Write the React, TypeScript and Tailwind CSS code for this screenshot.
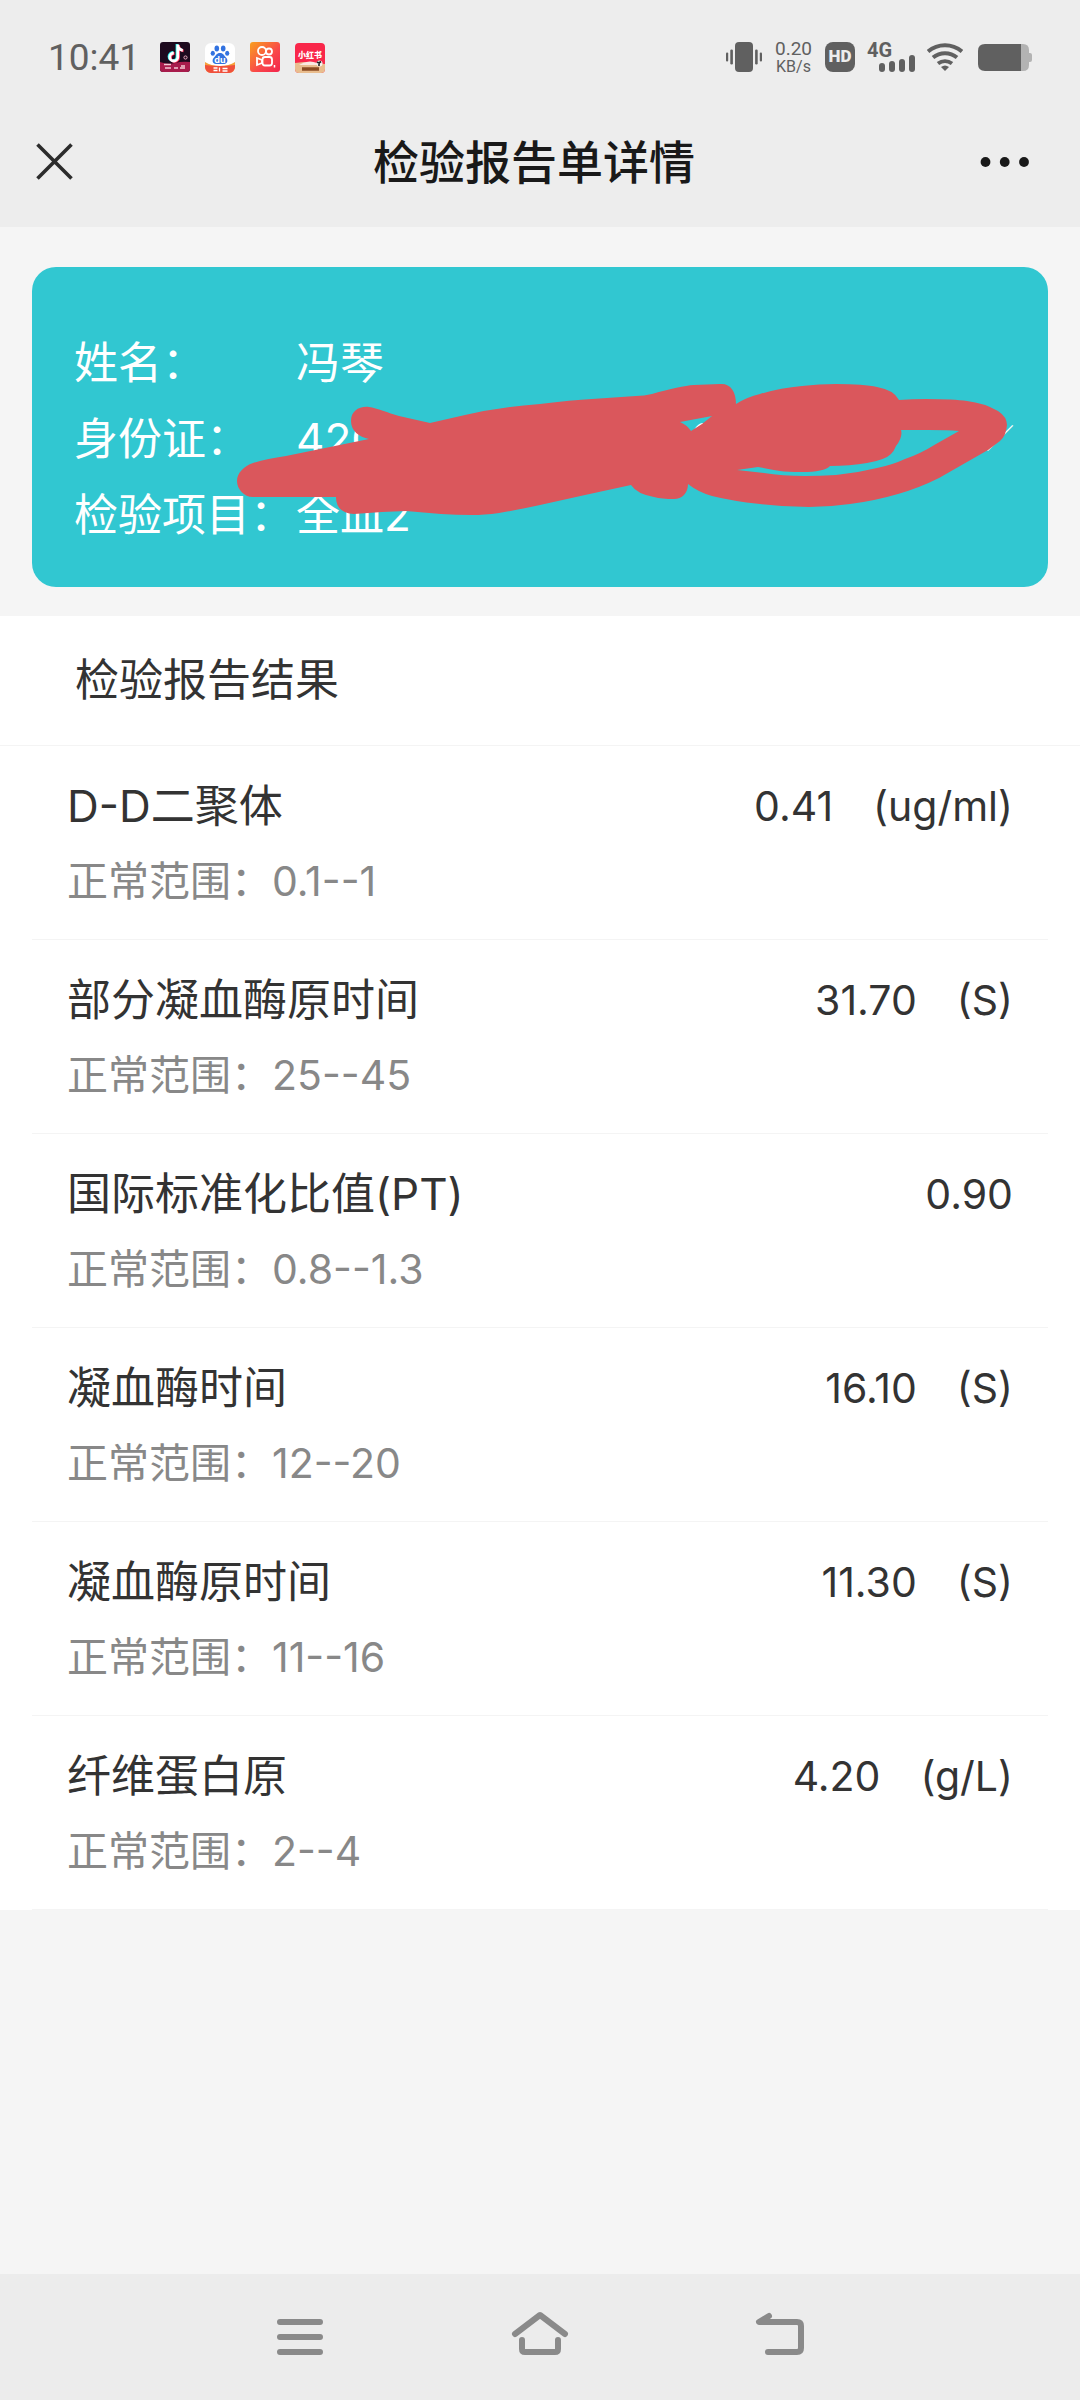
import React, { FC } from "react";

type Result = {
  name: string;
  range: string;
  value: string;
  unit?: string;
};

const results: Result[] = [
  { name: "D-D二聚体", range: "0.1--1", value: "0.41", unit: "(ug/ml)" },
  { name: "部分凝血酶原时间", range: "25--45", value: "31.70", unit: "(S)" },
  { name: "国际标准化比值(PT)", range: "0.8--1.3", value: "0.90" },
  { name: "凝血酶时间", range: "12--20", value: "16.10", unit: "(S)" },
  { name: "凝血酶原时间", range: "11--16", value: "11.30", unit: "(S)" },
  { name: "纤维蛋白原", range: "2--4", value: "4.20", unit: "(g/L)" },
];

const DouyinIcon = () => (
  <svg className="size-[30px]" viewBox="0 0 30 30" aria-hidden="true">
    <rect width="30" height="30" rx="3" fill="#1d0a1e" />
    <path d="M0 20q8 3 15 1t15-1v7a3 3 0 0 1-3 3H3a3 3 0 0 1-3-3z" fill="#a81c4c" />
    <g fill="none" strokeWidth="2.800">
      <path d="M17 2v12.500a4 4 0 1 1-4-4M17 3c.5 3 2.500 4.500 5 4.800" stroke="#25f4ee" />
      <path d="M18.600 3v12.500a4 4 0 1 1-4-4M18.600 4c.5 3 2.500 4.500 5 4.800" stroke="#fe2c55" />
      <path d="M17.800 2.500v12.500a4 4 0 1 1-4-4M17.800 3.500c.5 3 2.500 4.500 5 4.800" stroke="#fff" />
    </g>
    <circle cx="25.500" cy="15.500" r="1.600" fill="none" stroke="#e9a9bd" />
    <path d="M4 22.500h7M5 26h6m3 0h4m2 0h5M21 24h4" stroke="#f3c9d4" strokeWidth="1.300" />
  </svg>
);

const BaiduIcon = () => (
  <svg className="mt-px size-[30px]" viewBox="0 0 30 30" aria-hidden="true">
    <rect width="30" height="30" rx="6" fill="#fff" />
    <path d="M0 19q6 4 15 4t15-4v5a6 6 0 0 1-6 6H6a6 6 0 0 1-6-6z" fill="#f6a13c" />
    <path d="M0 22q8 1 15 1t15-1v2a6 6 0 0 1-6 6H6a6 6 0 0 1-6-6z" fill="#f0503c" />
    <g fill="#3272e0">
      <ellipse cx="11.800" cy="5.500" rx="2.300" ry="2.900" />
      <ellipse cx="18.200" cy="5.500" rx="2.300" ry="2.900" />
      <ellipse cx="7.800" cy="10.300" rx="2.100" ry="2.500" />
      <ellipse cx="22.200" cy="10.300" rx="2.100" ry="2.500" />
      <path d="M15 10c3.500 0 4 2.500 6 4.500 2.500 2.500 1.500 6.500-2 6.500h-8c-3.500 0-4.500-4-2-6.500 2-2 2.500-4.500 6-4.500z" />
    </g>
    <text x="15" y="20" fontSize="9" fontWeight="700" textAnchor="middle" fill="#fff" fontFamily="Inter, sans-serif">du</text>
    <path d="M8.500 25h4m-4 2.500h4m2-3v4m3-3h5m-5 2.500h5" stroke="#fff" strokeWidth="1.300" />
  </svg>
);

const KuaishouIcon = () => (
  <svg className="size-[30px]" viewBox="0 0 30 30" aria-hidden="true">
    <defs>
      <linearGradient id="ks" x1="0" y1="0" x2="1" y2="1">
        <stop offset="0" stopColor="#f9a01f" />
        <stop offset=".6" stopColor="#f9474a" />
        <stop offset="1" stopColor="#f3244c" />
      </linearGradient>
    </defs>
    <rect width="30" height="30" rx="3" fill="url(#ks)" />
    <g fill="none" stroke="#fff" strokeWidth="1.800">
      <circle cx="12" cy="9" r="4" />
      <circle cx="19" cy="9.500" r="3" />
      <rect x="12.500" y="15" width="9.500" height="8.500" rx="2.500" />
      <path d="M12 18l-5-2v7l5-2z" />
    </g>
    <path d="M24.500 23v2.500" stroke="#fff" strokeWidth="1.500" />
  </svg>
);

const XiaohongshuIcon = () => (
  <svg className="mt-px size-[30px]" viewBox="0 0 30 30" aria-hidden="true">
    <rect width="30" height="30" rx="4" fill="#f9274a" />
    <path d="M0 20l9-1 9 1 12 1v5a4 4 0 0 1-4 4H4a4 4 0 0 1-4-4z" fill="#e9bd8e" />
    <path d="M8 20q7-3 14 0l2 2H4z" fill="#fbe9e0" />
    <circle cx="24.500" cy="20.500" r="3" fill="#f4f1ee" />
    <path d="M22 19l2 1 2-1.500M24 20v3" stroke="#222" strokeWidth="1.600" fill="none" />
    <path d="M7 26h17" stroke="#8b4d22" strokeWidth="3.500" />
    <text x="15" y="15" fontSize="8" fontWeight="900" textAnchor="middle" fill="#fff" fontFamily="'Noto Sans CJK SC', sans-serif">小红书</text>
  </svg>
);

const VibrateIcon = () => (
  <svg className="h-[30px] w-9" viewBox="0 0 36 30" fill="#606060" aria-hidden="true">
    <rect x="9" width="18" height="30" rx="4" />
    <rect y="10.500" width="2.200" height="9" rx="1" />
    <rect x="4.300" y="7.500" width="2.600" height="15" rx="1.200" />
    <rect x="29.100" y="7.500" width="2.600" height="15" rx="1.200" />
    <rect x="33.800" y="10.500" width="2.200" height="9" rx="1" />
  </svg>
);

const WifiIcon = () => (
  <svg className="h-[28px] w-9" viewBox="0 0 36 28" fill="none" stroke="#606060" strokeWidth="4" aria-hidden="true">
    <path d="M1 8.500a26 26 0 0 1 34 0" />
    <path d="M6 14.500a19 19 0 0 1 24 0" />
    <path d="M11 20.500a12 12 0 0 1 14 0" />
    <path d="M14 24q4-3 8 0l-4 4z" fill="#606060" stroke="none" />
  </svg>
);

const BatteryIcon = () => (
  <svg className="ml-[15px] h-[27px] w-[54px]" viewBox="0 0 54 27" aria-hidden="true">
    <path d="M43 0h2q6 0 6 6v3h1q2 0 2 2v5q0 2-2 2h-1v3q0 6-6 6h-2z" fill="#b3b3b3" />
    <path d="M7 0h36v27H7q-7 0-7-7V7q0-7 7-7z" fill="#606060" />
  </svg>
);

const StatusBar = () => (
  <div className="flex h-24 items-center justify-between pt-[18px] pr-12 pl-12 text-[#606060]">
    <div className="flex items-center gap-5">
      <span className="font-['Roboto','Noto_Sans',sans-serif] text-[37px] leading-none">10:41</span>
      <div className="flex items-start gap-[15px]">
        <DouyinIcon />
        <BaiduIcon />
        <KuaishouIcon />
        <XiaohongshuIcon />
      </div>
    </div>
    <div className="flex items-center gap-3 font-['Roboto','Noto_Sans',sans-serif]">
      <VibrateIcon />
      <div className="flex w-[39px] flex-col items-center">
        <span className="text-[19px] leading-5">0.20</span>
        <span className="text-[16px] leading-4">KB/s</span>
      </div>
      <span className="flex size-[30px] items-center justify-center rounded-lg bg-[#606060] text-[17px] font-black text-[#ededed]">
        HD
      </span>
      <div className="flex h-[30px] w-12 flex-col">
        <span className="text-[20px] leading-4 font-bold">4G</span>
        <div className="-mt-[3px] flex items-end gap-1 self-end">
          <i className="h-[9px] w-1.5 rounded-sm bg-[#606060]" />
          <i className="h-[11px] w-1.5 rounded-sm bg-[#606060]" />
          <i className="h-[13px] w-1.5 rounded-sm bg-[#606060]" />
          <i className="h-[17px] w-1.5 rounded-sm bg-[#606060]" />
        </div>
      </div>
      <div className="flex items-center">
        <WifiIcon />
        <BatteryIcon />
      </div>
    </div>
  </div>
);

const TitleBar = () => (
  <div className="flex h-[131px] items-center justify-between pr-[51px] pl-9">
    <button type="button" aria-label="关闭" className="w-[52px]">
      <svg className="size-[37px]" viewBox="0 0 37 37" stroke="#2c2c2c" strokeWidth="3.600">
        <path d="M1.500 1.500l34 34M35.500 1.500l-34 34" />
      </svg>
    </button>
    <h1 className="text-[46px] leading-none font-medium text-[#191919]">检验报告单详情</h1>
    <button type="button" aria-label="更多">
      <svg className="h-[10px] w-[49px]" viewBox="0 0 49 10" fill="#191919">
        <circle cx="5.500" cy="5" r="4.900" />
        <circle cx="24.700" cy="5" r="4.900" />
        <circle cx="44" cy="5" r="4.900" />
      </svg>
    </button>
  </div>
);

// Marker strokes that hide the ID number
const Marker = () => (
  <svg className="absolute inset-0 size-full" viewBox="0 0 1016 320" preserveAspectRatio="none" aria-hidden="true">
    <path
      fill="#da575c"
      fillRule="evenodd"
      d="M205 214C205 206 212 199 221 196C230 193 241 191 254 189L298 180L337 172C327 170 319 164 319 154C319 144 327 139 337 140C345 141 356 146 367 149L398 156L433 148Q467 140 508 137Q540 133 560 132L604 129Q612 129 620 127Q648 119 662 118L688 117C698 116 704 124 704 137Q715 130 728 127Q748 121 770 119Q787 117 804 117Q832 117 845 120Q862 123 867 133Q880 132 894 132Q922 132 935 134Q952 136 966 144Q975 150 975 158Q974 169 968 174L956 183L907 211Q887 221 866 227Q842 234 818 237Q797 240 777 240Q752 240 728 237Q700 234 680 229Q666 225 656 217C656 226 650 232 642 232Q630 232 622 230Q605 227 599 218L553 228L508 238Q485 243 467 246Q452 248 440 248Q424 248 409 247L374 244L350 245L322 247Q304 246 304 230L221 230C212 230 205 222 205 214ZM648 155L680 149L670 157L659 164Q655 158 648 155ZM705 203L726 200Q737 202 748 204Q755 205 770 205Q792 205 798 199Q818 199 835 196Q853 193 859 187Q862 184 864 179Q871 170 869 163Q883 163 897 163Q915 163 927 164L904 177Q888 187 873 192Q860 198 845 201Q825 206 804 208Q788 209 773 209Q750 209 732 206Z"
    />
  </svg>
);

const PatientCard = () => (
  <section className="relative mx-8 mt-10 rounded-3xl bg-[#31c7d1] pt-[58px] pr-[34px] pb-[34px] pl-[42px] text-[44px] leading-[76px] text-white">
    <dl>
      <div className="flex">
        <dt className="w-[222px] shrink-0">姓名：</dt>
        <dd>冯琴</dd>
      </div>
      <div className="flex">
        <dt className="w-[222px] shrink-0">身份证：</dt>
        <dd className="flex grow">
          <span className="grow">420</span>
          <span className="pr-[268px]">0</span>
          <span className="text-[28px]">／</span>
        </dd>
      </div>
      <div className="flex">
        <dt className="w-[222px] shrink-0">检验项目：</dt>
        <dd>全血2</dd>
      </div>
    </dl>
    <Marker />
  </section>
);

type Prop = {
  result: Result;
};
const ResultRow: FC<Prop> = ({ result }) => {
  return (
    <li className="mx-8 border-b border-[#f4f4f4] pt-[22px] pr-[35px] pb-[21px] pl-[35px]">
      <div className="flex items-center justify-between leading-[76px]">
        <h3 className="text-[44px]">{result.name}</h3>
        <div className="flex gap-10 text-[41px]">
          <span>{result.value}</span>
          {result.unit && <span>{result.unit}</span>}
        </div>
      </div>
      <p className="text-[41px] leading-[74px] text-[#888888]">正常范围：{result.range}</p>
    </li>
  );
};

const NavBar = () => (
  <nav className="flex h-[126px] items-center justify-center bg-[#ececec]">
    <button type="button" aria-label="最近任务" className="flex w-60 justify-center">
      <svg className="size-[60px]" viewBox="0 0 60 60" fill="none" stroke="#8a8a8a" strokeWidth="6" strokeLinecap="round">
        <path d="M10 15h40M10 30h40M10 45h40" />
      </svg>
    </button>
    <button type="button" aria-label="主页" className="flex w-60 justify-center">
      <svg className="size-[60px]" viewBox="0 0 60 60" fill="none" stroke="#8a8a8a" strokeWidth="6" strokeLinecap="round" strokeLinejoin="round">
        <path d="M5 27L30 8l25 19M12 33v9q0 3 3 3h30q3 0 3-3v-9" />
      </svg>
    </button>
    <button type="button" aria-label="返回" className="flex w-60 justify-center">
      <svg className="size-[60px]" viewBox="0 0 60 60" fill="none" stroke="#8a8a8a" strokeWidth="6" strokeLinecap="round" strokeLinejoin="round">
        <path d="M19 9L9 15h38q4 0 4 4v22q0 4-4 4H18" />
      </svg>
    </button>
  </nav>
);

export default function App() {
  return (
    <div className="flex min-h-screen flex-col bg-[#f5f5f5] font-['Inter','Noto_Sans_CJK_SC',sans-serif]">
      <header className="bg-[#ededed]">
        <StatusBar />
        <TitleBar />
      </header>
      <main className="grow">
        <PatientCard />
        <section className="mt-[29px] bg-white text-[#333333]">
          <h2 className="border-b border-[#f4f4f4] px-[75px] text-[44px] leading-[129px]">检验报告结果</h2>
          <ul>
            {results.map((result) => (
              <ResultRow key={result.name} result={result} />
            ))}
          </ul>
        </section>
      </main>
      <NavBar />
    </div>
  );
}
